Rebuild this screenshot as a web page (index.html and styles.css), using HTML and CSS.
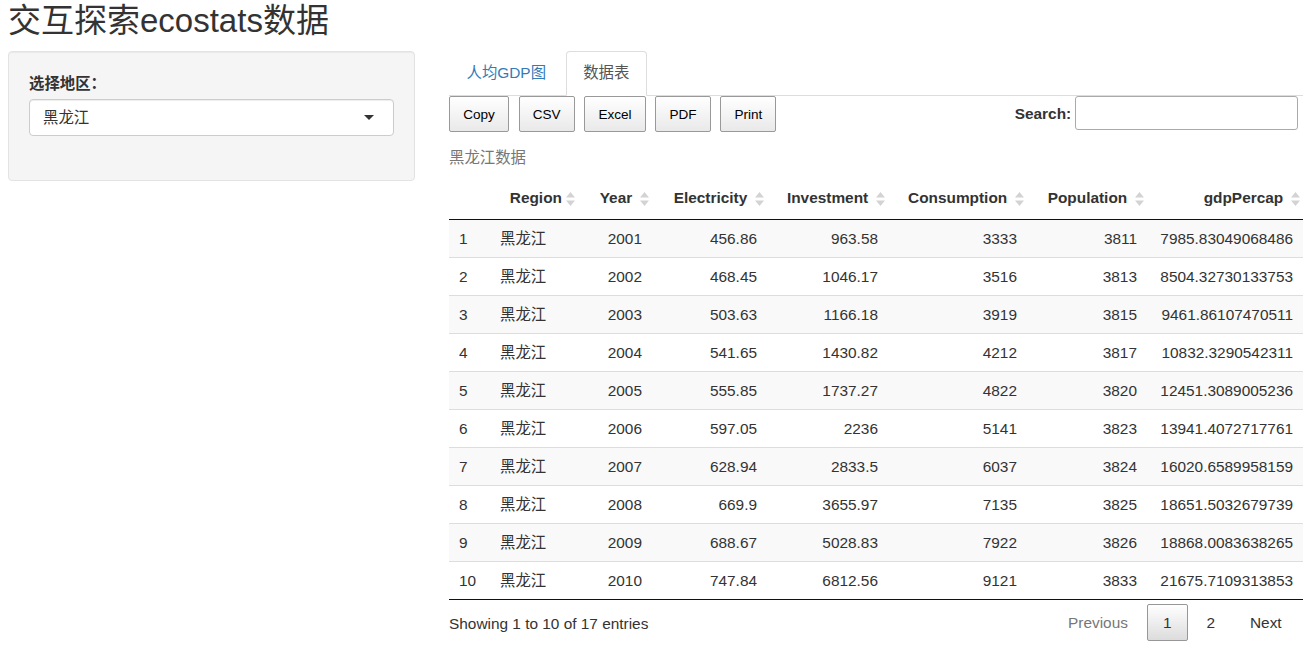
FILE: index.html
```html
<!DOCTYPE html>
<html lang="zh-CN">
<head>
<meta charset="utf-8">
<title>交互探索ecostats数据</title>
<link rel="stylesheet" href="styles.css">
</head>
<body>
<div class="page">
  <h2 class="title">交互探索ecostats数据</h2>
  <div class="layout">
    <div class="sidebar">
      <div class="well">
        <label class="ctl-label">选择地区：</label>
        <div class="select">
          <span class="select-text">黑龙江</span>
          <span class="caret"></span>
        </div>
      </div>
    </div>
    <div class="main">
      <ul class="tabs">
        <li class="tab"><a class="tab-link">人均GDP图</a></li>
        <li class="tab active"><a class="tab-link">数据表</a></li>
      </ul>
      <div class="dt-top">
        <div class="dt-buttons">
          <button class="dt-btn">Copy</button>
          <button class="dt-btn">CSV</button>
          <button class="dt-btn">Excel</button>
          <button class="dt-btn">PDF</button>
          <button class="dt-btn">Print</button>
        </div>
        <div class="dt-filter">
          <label class="filter-label">Search:</label>
          <input class="filter-input" type="search">
        </div>
      </div>
      <table class="dt">
        <caption class="dt-caption">黑龙江数据</caption>
        <colgroup>
          <col class="c-idx"><col class="c-region"><col class="c-year"><col class="c-elec"><col class="c-inv"><col class="c-cons"><col class="c-pop"><col class="c-gdp">
        </colgroup>
        <thead>
          <tr>
            <th class="th-idx"></th>
            <th class="left">Region<svg class="sort" viewBox="0 0 9 14" width="9" height="14"><polygon points="4.5,0 9,5.5 0,5.5"/><polygon points="0,8.5 9,8.5 4.5,14"/></svg></th>
            <th class="right">Year<svg class="sort" viewBox="0 0 9 14" width="9" height="14"><polygon points="4.5,0 9,5.5 0,5.5"/><polygon points="0,8.5 9,8.5 4.5,14"/></svg></th>
            <th class="right">Electricity<svg class="sort" viewBox="0 0 9 14" width="9" height="14"><polygon points="4.5,0 9,5.5 0,5.5"/><polygon points="0,8.5 9,8.5 4.5,14"/></svg></th>
            <th class="right">Investment<svg class="sort" viewBox="0 0 9 14" width="9" height="14"><polygon points="4.5,0 9,5.5 0,5.5"/><polygon points="0,8.5 9,8.5 4.5,14"/></svg></th>
            <th class="right">Consumption<svg class="sort" viewBox="0 0 9 14" width="9" height="14"><polygon points="4.5,0 9,5.5 0,5.5"/><polygon points="0,8.5 9,8.5 4.5,14"/></svg></th>
            <th class="right">Population<svg class="sort" viewBox="0 0 9 14" width="9" height="14"><polygon points="4.5,0 9,5.5 0,5.5"/><polygon points="0,8.5 9,8.5 4.5,14"/></svg></th>
            <th class="right">gdpPercap<svg class="sort" viewBox="0 0 9 14" width="9" height="14"><polygon points="4.5,0 9,5.5 0,5.5"/><polygon points="0,8.5 9,8.5 4.5,14"/></svg></th>
          </tr>
        </thead>
        <tbody>
          <tr><td>1</td><td>黑龙江</td><td class="r">2001</td><td class="r">456.86</td><td class="r">963.58</td><td class="r">3333</td><td class="r">3811</td><td class="r">7985.83049068486</td></tr>
          <tr><td>2</td><td>黑龙江</td><td class="r">2002</td><td class="r">468.45</td><td class="r">1046.17</td><td class="r">3516</td><td class="r">3813</td><td class="r">8504.32730133753</td></tr>
          <tr><td>3</td><td>黑龙江</td><td class="r">2003</td><td class="r">503.63</td><td class="r">1166.18</td><td class="r">3919</td><td class="r">3815</td><td class="r">9461.86107470511</td></tr>
          <tr><td>4</td><td>黑龙江</td><td class="r">2004</td><td class="r">541.65</td><td class="r">1430.82</td><td class="r">4212</td><td class="r">3817</td><td class="r">10832.3290542311</td></tr>
          <tr><td>5</td><td>黑龙江</td><td class="r">2005</td><td class="r">555.85</td><td class="r">1737.27</td><td class="r">4822</td><td class="r">3820</td><td class="r">12451.3089005236</td></tr>
          <tr><td>6</td><td>黑龙江</td><td class="r">2006</td><td class="r">597.05</td><td class="r">2236</td><td class="r">5141</td><td class="r">3823</td><td class="r">13941.4072717761</td></tr>
          <tr><td>7</td><td>黑龙江</td><td class="r">2007</td><td class="r">628.94</td><td class="r">2833.5</td><td class="r">6037</td><td class="r">3824</td><td class="r">16020.6589958159</td></tr>
          <tr><td>8</td><td>黑龙江</td><td class="r">2008</td><td class="r">669.9</td><td class="r">3655.97</td><td class="r">7135</td><td class="r">3825</td><td class="r">18651.5032679739</td></tr>
          <tr><td>9</td><td>黑龙江</td><td class="r">2009</td><td class="r">688.67</td><td class="r">5028.83</td><td class="r">7922</td><td class="r">3826</td><td class="r">18868.0083638265</td></tr>
          <tr><td>10</td><td>黑龙江</td><td class="r">2010</td><td class="r">747.84</td><td class="r">6812.56</td><td class="r">9121</td><td class="r">3833</td><td class="r">21675.7109313853</td></tr>
        </tbody>
      </table>
      <div class="dt-bottom">
        <div class="dt-info">Showing 1 to 10 of 17 entries</div>
        <div class="dt-paginate">
          <a class="pg-btn disabled">Previous</a>
          <a class="pg-btn current">1</a>
          <a class="pg-btn">2</a>
          <a class="pg-btn">Next</a>
        </div>
      </div>
    </div>
  </div>
</div>
</body>
</html>
```

FILE: styles.css
```css
* { box-sizing: border-box; }

html, body {
  margin: 0;
  padding: 0;
  background: #fff;
}

body {
  font-family: "Liberation Sans", Arial, "Noto Sans CJK SC", sans-serif;
  font-size: 15.4px;
  line-height: 22px;
  color: #333;
}

.page {
  padding: 0 7px 0 8px;
}

.title {
  margin: 3px 0 12px;
  font-size: 33px;
  line-height: 36px;
  font-weight: normal;
  color: #333;
}

.layout {
  display: flex;
  align-items: flex-start;
}

.sidebar {
  width: 407px;
  margin-right: 34px;
  flex: none;
}

.well {
  background: #f5f5f5;
  border: 1px solid #e3e3e3;
  border-radius: 4px;
  box-shadow: inset 0 1px 1px rgba(0,0,0,.05);
  padding: 21px 20px 44px;
}

.ctl-label {
  display: block;
  font-weight: bold;
  margin-bottom: 4px;
}

.select {
  position: relative;
  display: flex;
  align-items: center;
  height: 37px;
  padding: 0 13px;
  background: #fff;
  border: 1px solid #ccc;
  border-radius: 4px;
  box-shadow: inset 0 1px 1px rgba(0,0,0,.075);
}

.select-text {
  flex: 1;
}

.caret {
  width: 0;
  height: 0;
  border-style: solid;
  border-width: 5.5px 5.5px 0 5.5px;
  border-color: #333 transparent transparent transparent;
  margin-right: 6px;
}

.main {
  width: 854px;
  flex: none;
}

.tabs {
  list-style: none;
  margin: 0;
  padding: 0;
  display: flex;
  border-bottom: 1px solid #ddd;
}

.tab {
  margin-bottom: -1px;
  margin-right: 2.2px;
}

.tab-link {
  display: block;
  padding: 10px 16.5px 11px;
  line-height: 22px;
  border: 1px solid transparent;
  border-radius: 4px 4px 0 0;
  color: #337ab7;
  cursor: pointer;
}

.tab.active .tab-link {
  color: #555;
  background: #fff;
  border-color: #ddd #ddd transparent;
}

.dt-top {
  display: flex;
  justify-content: space-between;
  align-items: flex-start;
}

.dt-buttons {
  display: flex;
  gap: 9.5px;
}

.dt-btn {
  font-family: "Liberation Sans", Arial, sans-serif;
  font-size: 13.55px;
  line-height: 21px;
  padding: 6.5px 13.2px;
  color: #000;
  border: 1px solid #999;
  border-radius: 2px;
  background: linear-gradient(to bottom, #fff 0%, #e9e9e9 100%);
  cursor: pointer;
}

.dt-filter {
  display: flex;
  align-items: center;
  height: 34px;
  margin-right: 5.5px;
}

.filter-label {
  font-weight: bold;
  padding-top: 2px;
}

.filter-input {
  margin-left: 3.3px;
  width: 223px;
  height: 34px;
  border: 1px solid #aaa;
  border-radius: 3px;
  padding: 5px;
  background: #fff;
  font: inherit;
}

.dt {
  width: 854px;
  table-layout: fixed;
  border-collapse: separate;
  border-spacing: 0;
  border-bottom: 1px solid #111;
}

.dt-caption {
  caption-side: top;
  text-align: left;
  color: #777;
  padding: 15px 0 6px;
  line-height: 22px;
}

.c-idx { width: 41px; }
.c-region { width: 88px; }
.c-year { width: 74px; }
.c-elec { width: 115px; }
.c-inv { width: 121px; }
.c-cons { width: 139px; }
.c-pop { width: 120px; }
.c-gdp { width: 156px; }

.dt th {
  position: relative;
  font-weight: bold;
  padding: 12px 19.8px 10px;
  line-height: 22px;
  border-bottom: 1px solid #111;
  white-space: nowrap;
}

.dt th.left { text-align: left; }
.dt th.right { text-align: right; }

.sort {
  position: absolute;
  right: 3px;
  top: 17px;
  fill: #d3d3d3;
}

.dt td {
  padding: 8px 10px;
  line-height: 21px;
  border-top: 1px solid #ddd;
  white-space: nowrap;
}

.dt tbody tr:first-child td {
  border-top: none;
}

.dt tbody tr:nth-child(odd) td {
  background: #f9f9f9;
}

.dt td.r { text-align: right; }

.dt-bottom {
  display: flex;
  justify-content: space-between;
  align-items: flex-start;
}

.dt-info {
  padding-top: 12.6px;
}

.dt-paginate {
  display: flex;
  padding-top: 3.85px;
  margin-right: 5px;
}

.pg-btn {
  display: block;
  min-width: 23px;
  padding: 6.7px 15.4px;
  margin-left: 2.2px;
  line-height: 22px;
  text-align: center;
  border: 1px solid transparent;
  border-radius: 2px;
  color: #333;
  cursor: pointer;
}

.pg-btn.disabled {
  color: #777;
}

.pg-btn.current {
  border-color: #979797;
  background: linear-gradient(to bottom, #fff 0%, #dcdcdc 100%);
}
```
